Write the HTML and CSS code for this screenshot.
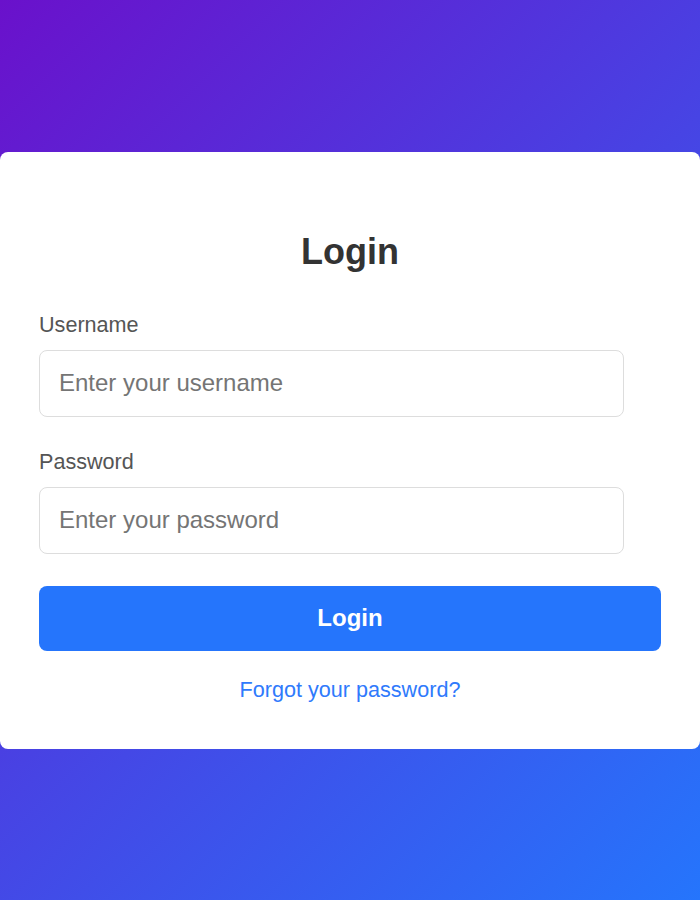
FILE: index.html
```html
<!DOCTYPE html>
<html lang="en">
<head>
<meta charset="utf-8">
<title>Login</title>
<link rel="stylesheet" href="styles.css">
</head>
<body>
  <main class="card">
    <h1 class="title">Login</h1>
    <form class="form">
      <label class="label" for="username">Username</label>
      <input class="input" id="username" type="text" placeholder="Enter your username">
      <label class="label" for="password">Password</label>
      <input class="input" id="password" type="password" placeholder="Enter your password">
      <button class="button" type="button">Login</button>
    </form>
    <a class="link" href="#">Forgot your password?</a>
  </main>
</body>
</html>
```
FILE: styles.css
```css
html, body {
  margin: 0;
  padding: 0;
}
body {
  min-height: 100vh;
  display: flex;
  align-items: center;
  background: linear-gradient(135deg, #6a11cb 0%, #2575fc 100%);
  font-family: "Liberation Sans", Arial, sans-serif;
}
.card {
  box-sizing: border-box;
  width: 100%;
  background: #fff;
  border-radius: 8px;
  padding: 79px 39px 47px;
  display: flex;
  flex-direction: column;
}
.title {
  margin: 0 0 40px;
  text-align: center;
  font-size: 36px;
  font-weight: 700;
  color: #333;
  line-height: 41px;
}
.form {
  display: flex;
  flex-direction: column;
  align-items: flex-start;
}
.label {
  font-size: 21.6px;
  line-height: 25px;
  color: #555;
  margin-bottom: 13px;
}
.input {
  box-sizing: border-box;
  width: 585px;
  height: 67px;
  padding: 0 19px;
  border: 1px solid #ddd;
  border-radius: 8px;
  font-family: "Liberation Sans", Arial, sans-serif;
  font-size: 24px;
  color: #333;
  margin: 0 0 32px;
  outline: none;
}
.input::placeholder {
  color: #757575;
}
.form .input:last-of-type {
  margin-bottom: 32px;
}
.button {
  width: 100%;
  height: 65px;
  border: none;
  border-radius: 8px;
  background: #2575fc;
  color: #fff;
  font-family: "Liberation Sans", Arial, sans-serif;
  font-size: 24px;
  font-weight: 700;
  cursor: pointer;
}
.link {
  margin-top: 26px;
  align-self: center;
  font-size: 21.6px;
  line-height: 25px;
  color: #2f7afc;
  text-decoration: none;
}
```
